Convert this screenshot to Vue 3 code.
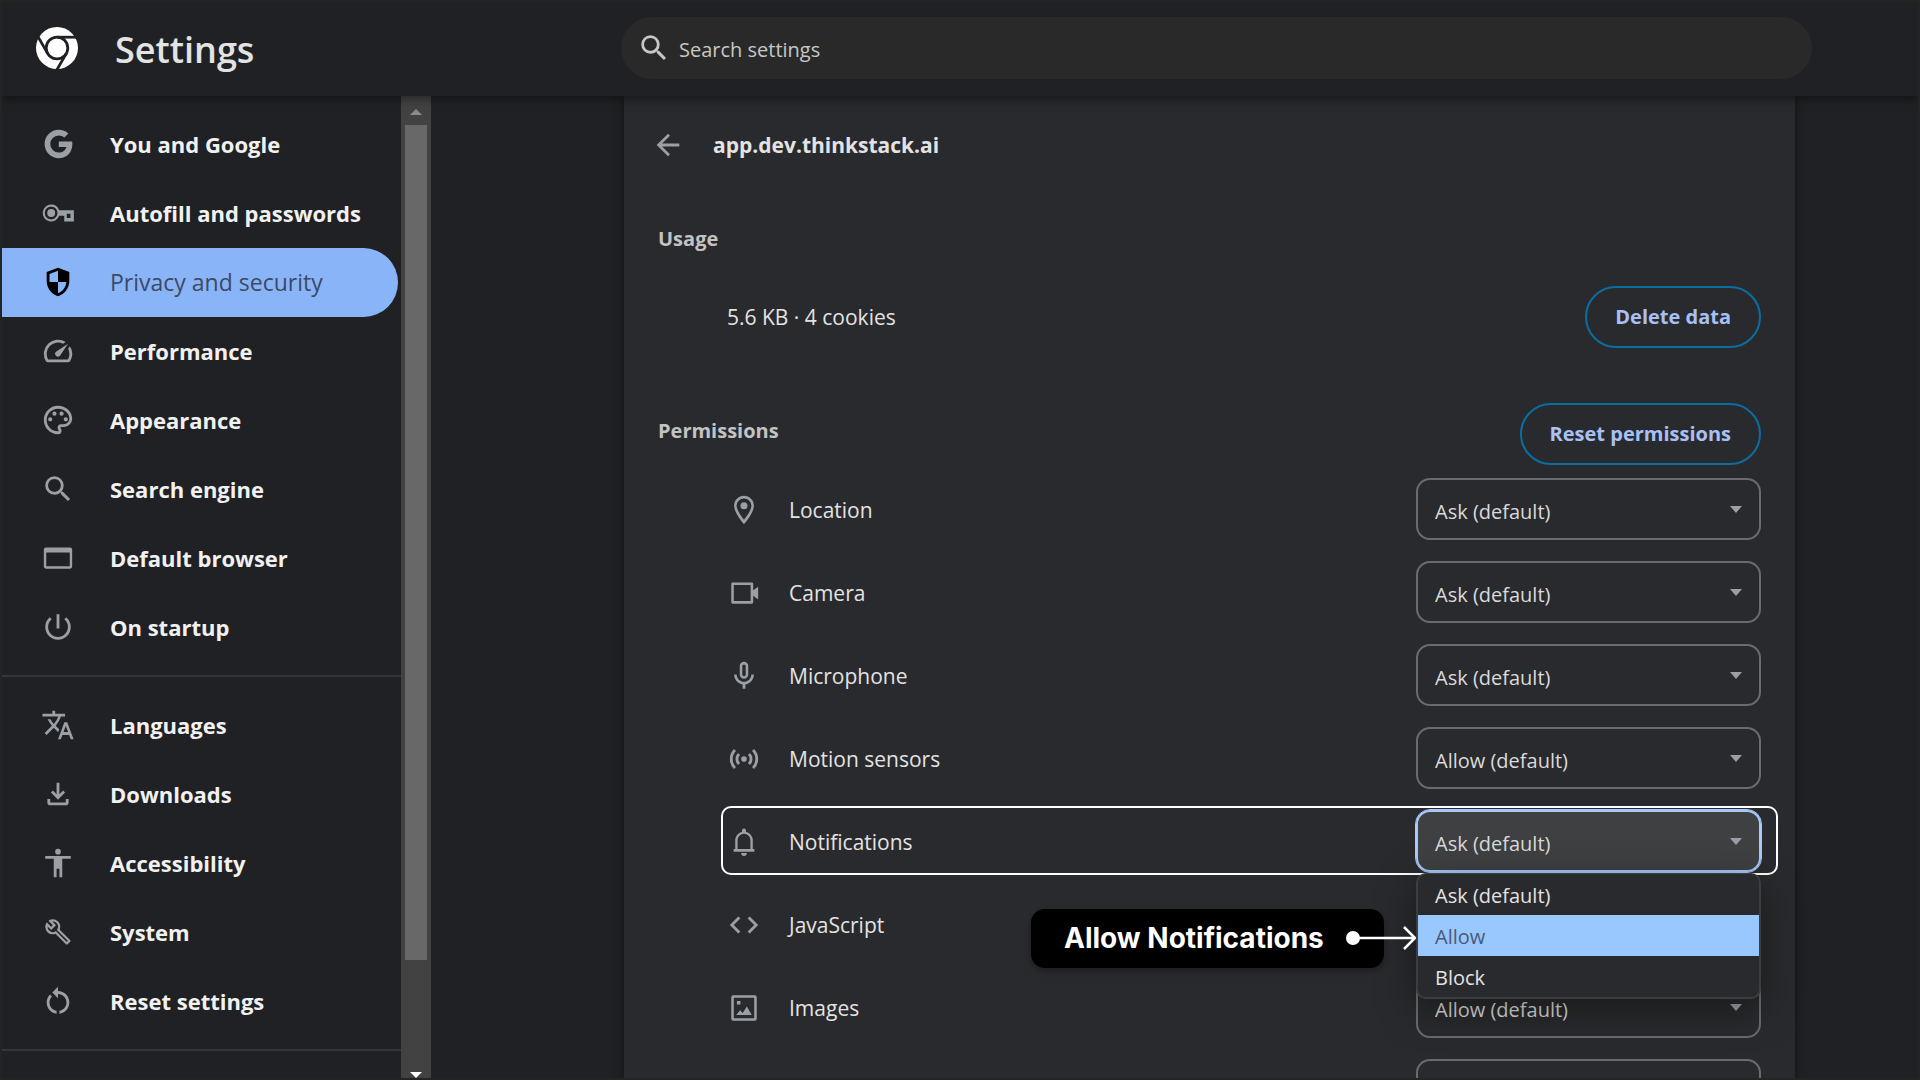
<script setup>
import { ref } from 'vue'

const mainNav = [
  { id: 'google', label: 'You and Google' },
  { id: 'key', label: 'Autofill and passwords' },
  { id: 'shield', label: 'Privacy and security', active: true },
  { id: 'speed', label: 'Performance' },
  { id: 'palette', label: 'Appearance' },
  { id: 'search', label: 'Search engine' },
  { id: 'window', label: 'Default browser' },
  { id: 'power', label: 'On startup' },
]

const advancedNav = [
  { id: 'translate', label: 'Languages' },
  { id: 'download', label: 'Downloads' },
  { id: 'accessibility', label: 'Accessibility' },
  { id: 'wrench', label: 'System' },
  { id: 'reset', label: 'Reset settings' },
]

const navGroups = [mainNav, advancedNav]

const icons = {
  google: 'M12.545 10.239v3.821h5.445c-.712 2.315-2.647 3.972-5.445 3.972a6.032 6.032 0 1 1 0-12.064c1.498 0 2.866.549 3.921 1.453l2.814-2.814A9.97 9.97 0 0 0 12.545 2C7.021 2 2.543 6.477 2.543 12s4.478 10 10.002 10c8.396 0 10.249-7.85 9.426-11.748z',
  key: 'M7.200 6a6 6 0 1 0 5.650 8H16.400v4h6.800v-8H12.850A6 6 0 0 0 7.200 6zm0 1.500a4.500 4.500 0 0 1 4.400 3.900v1.200a4.500 4.500 0 1 1-4.400-5.100zm0 1.700a2.800 2.800 0 1 0 0 5.600 2.800 2.800 0 0 0 0-5.600zM18.200 12.600h2.600v3h-2.600z',
  shield: 'M12 2L4 5v6.090c0 5.050 3.410 9.760 8 10.910 4.590-1.150 8-5.860 8-10.910V5zM12 4.140V12H6.060C6 11.700 6 11.400 6 11.090v-4.700zM12 12h5.940c-.4 3.700-2.800 6.900-5.940 7.930z',
  speed: 'M20.38 8.57l-1.23 1.85a8 8 0 0 1-.22 7.58H5.07A8 8 0 0 1 15.58 6.85l1.85-1.23A10 10 0 0 0 3.35 19a2 2 0 0 0 1.72 1h13.85a2 2 0 0 0 1.74-1 10 10 0 0 0-.27-10.44zm-9.79 6.84a2 2 0 0 0 2.83 0l5.66-8.49-8.49 5.66a2 2 0 0 0 0 2.83z',
  palette: 'M12 22C6.49 22 2 17.51 2 12S6.49 2 12 2s10 4.04 10 9c0 3.31-2.69 6-6 6h-1.770c-.28 0-.5.22-.5.5 0 .12.05.23.13.33.41.47.64 1.060.64 1.670A2.500 2.500 0 0 1 12 22zm0-18c-4.410 0-8 3.590-8 8s3.590 8 8 8c.28 0 .5-.22.5-.5a.54.54 0 0 0-.14-.35c-.41-.46-.63-1.050-.63-1.650a2.500 2.500 0 0 1 2.500-2.500H16c2.210 0 4-1.790 4-4 0-3.860-3.590-7-8-7zM6.500 10a1.500 1.500 0 1 0 0 3 1.500 1.500 0 0 0 0-3zM9.500 6a1.500 1.500 0 1 0 0 3 1.500 1.500 0 0 0 0-3zM14.500 6a1.500 1.500 0 1 0 0 3 1.500 1.500 0 0 0 0-3zM17.500 10a1.500 1.500 0 1 0 0 3 1.500 1.500 0 0 0 0-3z',
  search: 'M15.5 14h-.79l-.28-.27A6.471 6.471 0 0 0 16 9.5 6.5 6.5 0 1 0 9.5 16c1.610 0 3.090-.59 4.230-1.570l.27.28v.79l5 4.990L20.490 19l-4.990-5zm-6 0C7.010 14 5 11.990 5 9.500S7.010 5 9.500 5 14 7.010 14 9.500 11.990 14 9.500 14z',
  window: 'M3.500 4.500h17A1.500 1.500 0 0 1 22 6v12a1.500 1.500 0 0 1-1.500 1.500h-17A1.500 1.500 0 0 1 2 18V6a1.500 1.500 0 0 1 1.500-1.500zM3.700 8.200v9.600h16.600V8.200z',
  power: 'M13 3h-2v10h2V3zm4.830 2.170l-1.420 1.420A6.920 6.920 0 0 1 19 12c0 3.870-3.130 7-7 7s-7-3.130-7-7c0-2.190 1.010-4.140 2.580-5.420L6.170 5.170A8.930 8.930 0 0 0 3 12c0 4.970 4.030 9 9 9s9-4.030 9-9c0-2.740-1.230-5.180-3.170-6.830z',
  translate: 'M12.870 15.070l-2.540-2.510.03-.03A17.520 17.520 0 0 0 14.070 6H17V4h-7V2H8v2H1v1.990h11.170C11.500 7.920 10.440 9.750 9 11.350 8.070 10.320 7.300 9.190 6.690 8h-2c.73 1.630 1.730 3.170 2.980 4.560l-5.090 5.020L4 19l5-5 3.110 3.110zM18.500 10h-2L12 22h2l1.120-3h4.750L21 22h2zm-2.620 7l1.620-4.330L19.120 17z',
  download: 'M12 16l-5-5 1.400-1.400 2.600 2.600V4h2v8.200l2.600-2.600L17 11zM4.500 15.500h2V18h11v-2.500h2V18a2 2 0 0 1-2 2h-11a2 2 0 0 1-2-2z',
  accessibility: 'M12 2a2 2 0 1 1 0 4 2 2 0 0 1 0-4zm9 7h-6v13h-2v-6h-2v6H9V9H3V7h18z',
  wrench: 'M20.650 17.740l-7.400-7.400A5.700 5.700 0 0 0 12.080 4.600 5.690 5.690 0 0 0 5.200 4.050L8.320 7.170 7.160 8.330 4.030 5.200a5.700 5.700 0 0 0 .54 6.890 5.530 5.530 0 0 0 5.620 1.200l7.430 7.430c.32.32.83.32 1.150 0l1.880-1.880a.8.800 0 0 0 0-1.100zm-2.450 1.300l-7.700-7.700a3.600 3.600 0 0 1-4.770-.35A3.700 3.700 0 0 1 4.650 8.200l2.520 2.420 3.450-3.450-2.520-2.520c1.010-.06 2.030.3 2.800 1.070a3.700 3.700 0 0 1 .3 4.820l7.700 7.700z',
  reset: 'M12 5V2L8 6l4 4V7c3.310 0 6 2.690 6 6 0 2.970-2.170 5.430-5 5.910v2.020c3.950-.49 7-3.850 7-7.930 0-4.420-3.580-8-8-8zm-6 8c0-1.650.67-3.150 1.760-4.240L6.340 7.340A7.970 7.970 0 0 0 4 13c0 4.080 3.050 7.440 7 7.930v-2.020c-2.830-.48-5-2.940-5-5.910z',
  pin: 'M12 2C8.130 2 5 5.130 5 9c0 5.250 7 13 7 13s7-7.750 7-13c0-3.870-3.130-7-7-7zM6.800 9c0-2.760 2.440-5.200 5.200-5.200s5.200 2.440 5.200 5.200c0 2.880-3.080 7.190-5.200 9.880C9.920 16.210 6.800 11.850 6.800 9zM12 6.500a2.500 2.500 0 1 0 0 5 2.500 2.500 0 0 0 0-5z',
  camera: 'M4 4.500h13.500a1 1 0 0 1 1 1V10L22 7.500v9L18.500 14v4.500a1 1 0 0 1-1 1H4a1 1 0 0 1-1-1v-13a1 1 0 0 1 1-1zm.8 1.800v11.400h11.900V6.300z',
  mic: 'M12 14c1.660 0 3-1.340 3-3V5c0-1.660-1.340-3-3-3S9 3.340 9 5v6c0 1.660 1.340 3 3 3zm-1.200-9a1.200 1.200 0 0 1 2.400 0v6a1.200 1.200 0 0 1-2.400 0zM17.200 11a5.200 5.200 0 0 1-10.400 0H5c0 3.530 2.610 6.430 6 6.920V21h2v-3.080c3.390-.49 6-3.390 6-6.920z',
  motion: 'M7.760 16.240a6 6 0 0 1 0-8.480l1.420 1.420a4 4 0 0 0 0 5.650zM16.240 16.240a6 6 0 0 0 0-8.480l-1.420 1.420a4 4 0 0 1 0 5.650zM12 10a2 2 0 1 0 0 4 2 2 0 0 0 0-4zm8 2c0 2.210-.9 4.210-2.350 5.650l1.420 1.420a10 10 0 0 0 0-14.140l-1.420 1.420A8 8 0 0 1 20 12zM6.350 6.350L4.930 4.930a10 10 0 0 0 0 14.140l1.420-1.420a8 8 0 0 1 0-11.300z',
  bell: 'M12 2.500a1.400 1.400 0 0 0-1.400 1.400v.8A6.300 6.300 0 0 0 5.800 11v6H4.700v1.800h14.600V17h-1.100v-6a6.300 6.300 0 0 0-4.800-6.300v-.8A1.400 1.400 0 0 0 12 2.500zM12 6.200a4.600 4.600 0 0 1 4.500 4.800v6h-9v-6A4.600 4.600 0 0 1 12 6.200zM10 19.800a2 2 0 0 0 4 0z',
  code: 'M9.400 16.600L4.800 12l4.600-4.600L8 6l-6 6 6 6zM14.600 16.600l4.600-4.600-4.600-4.600L16 6l6 6-6 6z',
  image: 'M4.500 3h15A1.500 1.500 0 0 1 21 4.500v15a1.500 1.500 0 0 1-1.500 1.500h-15A1.500 1.500 0 0 1 3 19.500v-15A1.500 1.500 0 0 1 4.500 3zm.3 1.800v14.400h14.400V4.800zM7 7h2.500v2.500H7zM6.500 17l2.700-3.500 1.900 2 2.900-4.500 3.500 6z',
  popup: 'M3 3h8v8H3zM13 3h8v8h-8zM3 13h8v8H3zM13 13h8v8h-8z',
  back: 'M20 11H7.830l5.590-5.590L12 4l-8 8 8 8 1.410-1.410L7.830 13H20z',
}

const askOptions = ['Ask (default)', 'Allow', 'Block']
const allowOptions = ['Allow (default)', 'Allow', 'Block']

const permissions = ref([
  { id: 'location', icon: 'pin', label: 'Location', options: askOptions, value: 'Ask (default)' },
  { id: 'camera', icon: 'camera', label: 'Camera', options: askOptions, value: 'Ask (default)' },
  { id: 'microphone', icon: 'mic', label: 'Microphone', options: askOptions, value: 'Ask (default)' },
  { id: 'motion', icon: 'motion', label: 'Motion sensors', options: allowOptions, value: 'Allow (default)' },
  { id: 'notifications', icon: 'bell', label: 'Notifications', options: askOptions, value: 'Ask (default)', open: true },
  { id: 'javascript', icon: 'code', label: 'JavaScript', options: allowOptions, value: 'Allow (default)' },
  { id: 'images', icon: 'image', label: 'Images', options: allowOptions, value: 'Allow (default)' },
  { id: 'other', icon: 'popup', label: '', options: [], value: '' },
])
</script>

<template>
  <div class="app">
    <header class="topbar">
      <div class="brand">
        <svg class="logo" viewBox="-21 -21 42 42" aria-hidden="true">
          <circle r="21" fill="#fff" />
          <g fill="none" stroke="#202124" stroke-width="2.800">
            <circle r="10.800" />
            <path d="M0-10.800H22" />
            <path d="M0-10.800H22" transform="rotate(120)" />
            <path d="M0-10.800H22" transform="rotate(240)" />
          </g>
        </svg>
        <h1>Settings</h1>
      </div>
      <label class="search">
        <svg class="icon" viewBox="0 0 24 24" aria-hidden="true"><path :d="icons.search" /></svg>
        <input type="search" placeholder="Search settings" aria-label="Search settings" />
      </label>
    </header>

    <div class="body">
      <aside class="sidebar">
        <nav class="menu">
          <ul v-for="(group, index) in navGroups" :key="index" class="group">
            <li v-for="item in group" :key="item.id">
              <a href="#" class="nav-item" :class="{ active: item.active }">
                <svg class="icon" viewBox="0 0 24 24" aria-hidden="true">
                  <path fill-rule="evenodd" :d="icons[item.id]" />
                </svg>
                <span>{{ item.label }}</span>
              </a>
            </li>
          </ul>
        </nav>
        <div class="scrollbar" aria-hidden="true">
          <span class="arrow up"></span>
          <span class="thumb"></span>
          <span class="arrow down"></span>
        </div>
      </aside>

      <main class="content">
        <section class="card">
          <div class="site">
            <button class="back" type="button" aria-label="Back">
              <svg class="icon" viewBox="0 0 24 24" aria-hidden="true"><path :d="icons.back" /></svg>
            </button>
            <h2>app.dev.thinkstack.ai</h2>
          </div>

          <h3 class="usage-title">Usage</h3>
          <div class="usage">
            <span>5.6 KB · 4 cookies</span>
            <button class="pill" type="button">Delete data</button>
          </div>

          <div class="permissions-head">
            <h3>Permissions</h3>
            <button class="pill" type="button">Reset permissions</button>
          </div>

          <ul class="permissions">
            <li v-for="item in permissions" :key="item.id" class="row" :class="{ open: item.open }">
              <svg class="icon" viewBox="0 0 24 24" aria-hidden="true">
                <path fill-rule="evenodd" :d="icons[item.icon]" />
              </svg>
              <label :for="item.id">{{ item.label }}</label>
              <div class="select">
                <select :id="item.id" v-model="item.value">
                  <option v-for="option in item.options" :key="option">{{ option }}</option>
                </select>
                <span class="caret"></span>
                <template v-if="item.open">
                  <ul class="options" role="listbox" aria-label="Notifications">
                    <li
                      v-for="option in item.options"
                      :key="option"
                      role="option"
                      :class="{ hovered: option === 'Allow' }"
                      :aria-selected="option === item.value"
                    >{{ option }}</li>
                  </ul>
                  <div class="callout">
                    <span>Allow Notifications</span>
                    <svg class="pointer" viewBox="0 0 70 24" aria-hidden="true">
                      <circle cx="7" cy="12" r="7" fill="#fff" />
                      <path d="M7 12H69M58 1L69 12 58 23" fill="none" stroke="#fff" stroke-width="2.500" />
                    </svg>
                  </div>
                </template>
              </div>
            </li>
          </ul>
        </section>
      </main>
    </div>
  </div>
</template>

<style>
body {
  margin: 0;
  background: #202124;
}
</style>

<style scoped>
* {
  box-sizing: border-box;
}

.app {
  display: flex;
  flex-direction: column;
  height: 100vh;
  overflow: hidden;
  border: 2px solid #232524;
  background: #202124;
  color: #e3e3e3;
  font-family: "Open Sans", "Noto Sans", sans-serif;
  font-size: 20px;
  line-height: 28px;
}

ul,
h1,
h2,
h3 {
  margin: 0;
  padding: 0;
  list-style: none;
}

.icon {
  flex: none;
  width: 34px;
  height: 34px;
  fill: #9aa0a6;
}

.topbar {
  position: relative;
  z-index: 1;
  display: flex;
  align-items: center;
  flex: none;
  height: 94px;
  padding: 0 106px 2px 0;
  background: #202124;
  box-shadow: 0 2px 10px rgba(0, 0, 0, 0.5);
}

.brand {
  display: flex;
  align-items: center;
  gap: 37px;
  flex: none;
  width: 619px;
  padding-left: 34px;
}

.logo {
  width: 42px;
  height: 42px;
}

h1 {
  padding-top: 4px;
  font-size: 36px;
  line-height: 48px;
  font-weight: 600;
}

.search {
  display: flex;
  align-items: center;
  gap: 8px;
  flex: 1;
  height: 62px;
  padding: 0 16px;
  border-radius: 31px;
  background: #292929;
}

.search .icon {
  fill: #c7c7c7;
}

.search input {
  flex: 1;
  min-width: 0;
  padding: 3px 0 0;
  border: 0;
  outline: 0;
  background: none;
  color: #c7c7c7;
  font: inherit;
  font-weight: 500;
}

.search input::placeholder {
  color: #c7c7c7;
  opacity: 1;
}

.body {
  display: flex;
  flex: 1;
  min-height: 0;
}

.sidebar {
  display: flex;
  flex: none;
  width: 429px;
}

.menu {
  flex: 1;
  overflow: hidden;
}

.group {
  padding: 14px 3px 13px 0;
  border-bottom: 2px solid #35363a;
}

.nav-item {
  display: flex;
  align-items: center;
  gap: 35px;
  height: 69px;
  padding: 0 0 2px 39px;
  border-radius: 0 35px 35px 0;
  color: #f1f1f1;
  font-size: 22px;
  font-weight: 700;
  text-decoration: none;
  white-space: nowrap;
}

.nav-item.active {
  background: #8ab4f8;
  color: #3c4a66;
  font-size: 23px;
  font-weight: 500;
}

.nav-item.active .icon {
  fill: #000;
}

.scrollbar {
  display: flex;
  flex-direction: column;
  align-items: center;
  flex: none;
  width: 30px;
  background: #424242;
}

.arrow {
  flex: none;
  border: 6px solid transparent;
}

.up {
  margin-top: 7px;
  border-bottom-color: #8b8b8b;
}

.thumb {
  flex: 1;
  width: 22px;
  margin: 10px 0 112px;
  background: #686868;
}

.down {
  margin-bottom: -6px;
  border-top-color: #fff;
}

.content {
  flex: 1;
  min-width: 0;
  padding: 0 123px 0 193px;
}

.card {
  height: 100%;
  padding: 14px 34px 0;
  background: #292a2d;
  box-shadow: 0 2px 8px rgba(0, 0, 0, 0.5);
}

.site {
  display: flex;
  align-items: center;
  gap: 28px;
  height: 70px;
}

.back {
  display: flex;
  margin-left: -7px;
  padding: 0;
  border: 0;
  background: none;
}

h2 {
  font-size: 21px;
  font-weight: 700;
}

h3 {
  color: #c3c3c3;
  font-size: 20px;
  font-weight: 700;
}

.usage-title {
  padding: 45px 0 33px;
}

.usage {
  display: flex;
  align-items: center;
  justify-content: space-between;
  padding-left: 69px;
  font-size: 21px;
  font-weight: 500;
}

.pill {
  height: 62px;
  padding: 0 28px;
  border: 2px solid #0b6ea3;
  border-radius: 31px;
  background: none;
  color: #a8c0f5;
  font: inherit;
  font-size: 20px;
  font-weight: 700;
}

.permissions-head {
  display: flex;
  align-items: center;
  justify-content: space-between;
  margin-top: 55px;
}

.permissions-head h3 {
  padding-bottom: 6px;
}

.permissions {
  padding: 2px 0 0 63px;
}

.row {
  display: flex;
  align-items: center;
  gap: 28px;
  height: 69px;
  margin: 7px -17px 14px 0;
  padding: 0 15px 0 4px;
  border: 2px solid transparent;
  border-radius: 10px;
  font-weight: 500;
}

.row > .icon {
  margin-top: 2px;
}

.row label {
  flex: 1;
  padding-top: 2px;
  font-size: 21px;
}

.row.open {
  border-color: #fff;
}

.select {
  position: relative;
  flex: none;
  width: 345px;
}

select {
  display: block;
  width: 100%;
  height: 62px;
  padding: 6px 17px 0;
  border: 2px solid #6a6b6c;
  border-radius: 14px;
  appearance: none;
  background: none;
  color: #dadada;
  font: inherit;
}

.row.open select {
  border-color: #a8c7fa;
  outline: 1px solid #a8c7fa;
  background: #3f4042;
}

.caret {
  position: absolute;
  top: 28px;
  right: 19px;
  border: 6px solid transparent;
  border-top: 7px solid #9aa0a6;
  border-bottom: 0;
  pointer-events: none;
}

.options {
  position: absolute;
  z-index: 2;
  top: 63px;
  left: 0;
  width: 100%;
  border: 2px solid #3c3d3f;
  border-top-width: 1px;
  border-radius: 10px;
  background: #292a2d;
  box-shadow: 0 10px 40px rgba(0, 0, 0, 0.4);
}

.options li {
  height: 41px;
  padding: 0 17px;
  line-height: 43px;
}

.options .hovered {
  background: #99c8ff;
  color: #4a5a75;
}

.callout {
  position: absolute;
  z-index: 3;
  top: 99px;
  right: 377px;
  display: flex;
  align-items: center;
  width: 353px;
  height: 59px;
  padding-left: 33px;
  border-radius: 14px;
  background: #000;
  box-shadow: 0 3px 6px rgba(0, 0, 0, 0.3);
  color: #fff;
  font-family: Inter, sans-serif;
  font-size: 28px;
  font-weight: 700;
  white-space: nowrap;
}

.pointer {
  position: absolute;
  right: -32px;
  width: 70px;
  height: 24px;
}
</style>
